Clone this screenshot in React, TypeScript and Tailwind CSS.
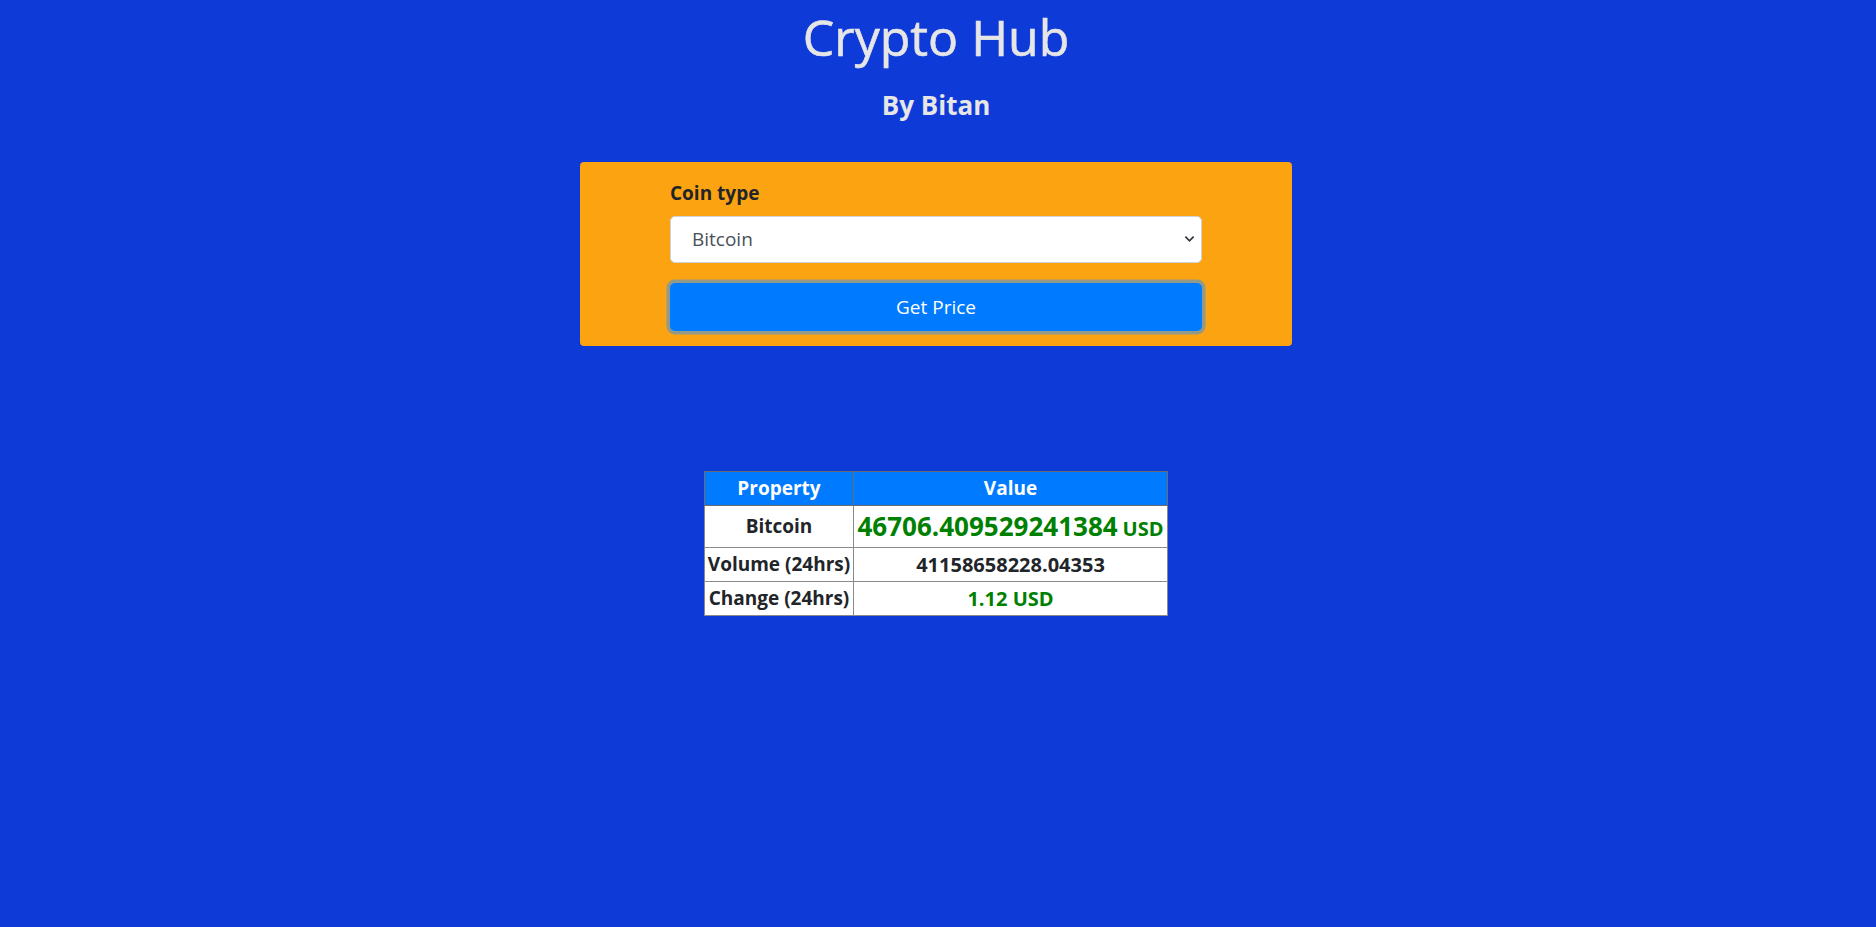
import { useState } from 'react';

const coins = ['Bitcoin', 'Ethereum', 'Litecoin', 'Dogecoin', 'Ripple'];

export default function App() {
    const [coin, setCoin] = useState('Bitcoin');

    return (
        <div className="min-h-screen bg-[#0e3ad7] font-['Segoe_UI','Open_Sans',sans-serif] text-[#212529]">
            <div className="flex flex-col items-center pr-[4px]">
                {/* Header */}
                <h1 className="pt-[8px] text-[50px] leading-[58px] font-normal text-[#e6e6e6] [-webkit-text-stroke:0.6px_#e6e6e6]">Crypto Hub</h1>
                <h3 className="mt-[23px] text-[26px] leading-[32px] font-bold text-[#e6e6e6]">By Bitan</h3>

                {/* Form card */}
                <div className="mt-[41px] w-[712px] rounded-[4px] bg-[#fca311] pt-[16px] pb-[15px] px-[90px]">
                    <label className="block mb-2 text-[19px] leading-[30px] font-bold text-[#212529]">Coin type</label>
                    <div className="relative">
                        <select
                            value={coin}
                            onChange={(e) => setCoin(e.target.value)}
                            className="block w-full h-[47px] appearance-none rounded-[5px] border border-[#ced4da] bg-white pl-[21px] pr-8 text-[19px] text-[#495057] outline-none"
                        >
                            {coins.map((c) => (
                                <option key={c}>{c}</option>
                            ))}
                        </select>
                        <svg
                            className="pointer-events-none absolute right-[7px] top-[17px] w-[11px] h-[11px]"
                            viewBox="0 0 12 12"
                            fill="none"
                            stroke="#343a40"
                            strokeWidth="2"
                        >
                            <path d="M1.5 4l4.5 4.5L10.5 4" />
                        </svg>
                    </div>
                    <button className="mt-[20px] block w-full h-[48px] rounded-[5px] bg-[#007bff] text-[19px] text-white shadow-[0_0_0_3.5px_rgba(38,143,255,0.5)]">
                        Get Price
                    </button>
                </div>

                {/* Result table */}
                <table className="mt-[125px] border-collapse border border-[#6b6b6b] bg-white text-center text-[19px] font-bold">
                    <thead>
                        <tr className="h-[34px] bg-[#007bff] text-white">
                            <th className="w-[149px] border border-[#6b6b6b] px-[1px]">Property</th>
                            <th className="w-[314px] border border-[#6b6b6b] border-l-[#4d9dff] px-[1px]">Value</th>
                        </tr>
                    </thead>
                    <tbody>
                        <tr className="h-[42px]">
                            <td className="border border-[#8a8a8a] px-[1px]">Bitcoin</td>
                            <td className="border border-[#8a8a8a] px-[1px] text-[#008000] whitespace-nowrap">
                                <span className="text-[26px]">46706.409529241384</span>{' '}
                                <span className="text-[20px]">USD</span>
                            </td>
                        </tr>
                        <tr className="h-[34px]">
                            <td className="border border-[#8a8a8a] px-[1px] whitespace-nowrap">Volume (24hrs)</td>
                            <td className="border border-[#8a8a8a] px-[1px] text-[20px]">41158658228.04353</td>
                        </tr>
                        <tr className="h-[34px]">
                            <td className="border border-[#8a8a8a] px-[1px] whitespace-nowrap">Change (24hrs)</td>
                            <td className="border border-[#8a8a8a] px-[1px] text-[20px] text-[#008000]">1.12 USD</td>
                        </tr>
                    </tbody>
                </table>
            </div>
        </div>
    );
}
